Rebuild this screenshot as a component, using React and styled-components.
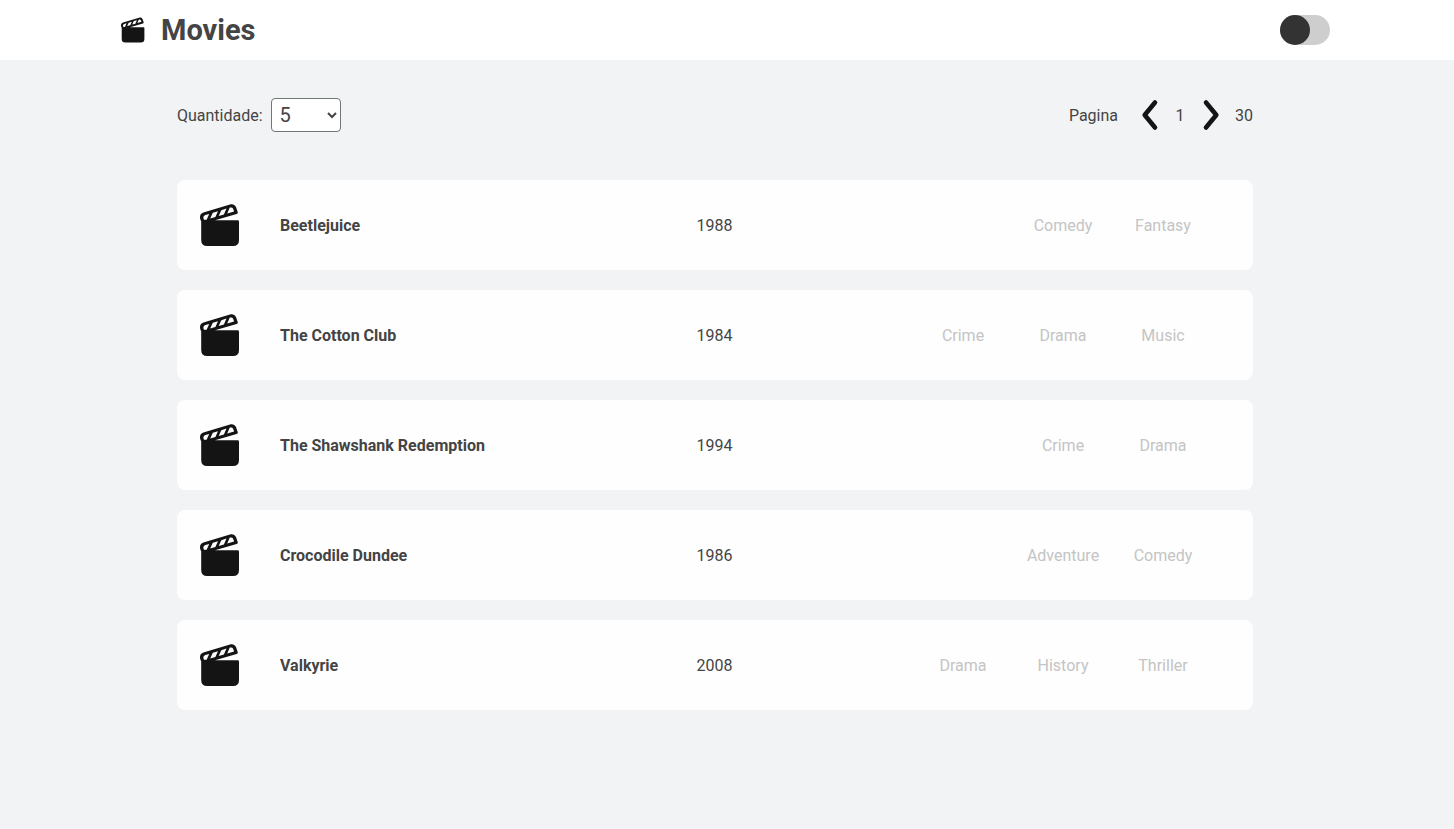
import React, { useState } from 'react';
import styled, { createGlobalStyle } from 'styled-components';

const GlobalStyle = createGlobalStyle`
  * { box-sizing: border-box; }
  body {
    margin: 0;
    min-height: 100vh;
    background: #f2f3f5;
    color: #444;
    font: 400 16px/21px Roboto, sans-serif;
  }
`;

const Header = styled.header`
  display: flex;
  align-items: center;
  justify-content: space-between;
  height: 60px;
  padding: 0 124px 0 121px;
  background: #fff;
`;

const Brand = styled.div`
  display: flex;
  align-items: center;
  gap: 16px;
`;

const Title = styled.h1`
  margin: 0;
  font-size: 29px;
  line-height: 36px;
  font-weight: 700;
`;

const ThemeSwitch = styled.input`
  appearance: none;
  display: flex;
  width: 50px;
  height: 30px;
  margin: 0;
  border-radius: 15px;
  background: #cecece;
  cursor: pointer;

  &::before {
    content: '';
    width: 30px;
    height: 30px;
    border-radius: 50%;
    background: #333;
  }

  &:checked { justify-content: flex-end; }
`;

const Main = styled.main`
  padding: 30px 201px 60px 177px;
`;

const Toolbar = styled.div`
  display: flex;
  align-items: center;
  justify-content: space-between;
  height: 50px;
  margin-bottom: 40px;
`;

const Quantity = styled.label`
  display: flex;
  align-items: center;
  gap: 8px;
`;

const Select = styled.select`
  width: 70px;
  height: 34px;
  padding: 0 0 0 4px;
  border: 1px solid #6f7777;
  border-radius: 4px;
  background: #fff;
  color: #444;
  font: 400 20px Roboto, sans-serif;
`;

const Pager = styled.nav`
  display: flex;
  align-items: center;
`;

const PageNumber = styled.span`
  width: 20px;
  text-align: center;
`;

const PageButton = styled.button`
  display: flex;
  align-items: center;
  justify-content: center;
  width: 30px;
  height: 34px;
  margin: 0 ${(p) => (p.$next ? 9 : 5)}px 0 ${(p) => (p.$next ? 6 : 17)}px;
  padding: 0;
  border: 0;
  background: none;
  color: #141414;
  cursor: pointer;
`;

const MovieList = styled.ul`
  display: grid;
  gap: 20px;
  margin: 0;
  padding: 0;
  list-style: none;
`;

const MovieRow = styled.li`
  display: grid;
  grid-template-columns: 1fr 100px 1fr;
  align-items: center;
  height: 90px;
  padding: 0 40px 0 23px;
  border-radius: 8px;
  background: #fefefe;
`;

const MovieName = styled.div`
  display: flex;
  align-items: center;
  gap: 40px;
  font-weight: 700;
`;

const Year = styled.span`
  margin-left: 16px;
  text-align: center;
`;

const Genres = styled.div`
  display: flex;
  justify-content: flex-end;
  color: #c4c4c4;
`;

const Genre = styled.span`
  width: 100px;
  text-align: center;
`;

const Clapper = ({ width, height }) => (
  <svg width={width} height={height} viewBox="0 0 40 42" aria-hidden="true">
    <path
      fill="#141414"
      fillRule="evenodd"
      d="M1.2 17.2 C.5 16 0 14.8 0 13.3 C0 10.8 1.2 9.2 3.4 8.5 L30 .4 C32.6-.4 35 .7 36 3 L37.8 8.2 Q38 9.6 36.6 10 L15 16.3 H37.6 Q39 16.3 39 17.7 V36 Q39 42 33 42 H7.2 Q1.2 42 1.2 36 Z M5.4 11.1 L9.2 9.9 L6.6 15.8 L4 15.8 Q2.2 12.2 5.4 11.1 Z M12.8 8.8 L18 7.2 L15.4 12.9 L10.2 14.4 Z M21.3 6.2 L26.5 4.6 L23.9 10.4 L18.7 11.9 Z M29.8 3.6 Q32.3 2.9 33.1 4.8 L34.1 7.4 L27.2 9.4 Z"
    />
  </svg>
);

const Chevron = ({ next }) => (
  <svg width="18" height="32" viewBox="0 0 18 32" aria-hidden="true">
    <path
      d={next ? 'M4 3.5 L14.3 16 L4 28.5' : 'M14 3.5 L3.7 16 L14 28.5'}
      fill="none"
      stroke="currentColor"
      strokeWidth="4.6"
      strokeLinecap="round"
      strokeLinejoin="round"
    />
  </svg>
);

const movies = [
  { title: 'Beetlejuice', year: 1988, genres: ['Comedy', 'Fantasy'] },
  { title: 'The Cotton Club', year: 1984, genres: ['Crime', 'Drama', 'Music'] },
  { title: 'The Shawshank Redemption', year: 1994, genres: ['Crime', 'Drama'] },
  { title: 'Crocodile Dundee', year: 1986, genres: ['Adventure', 'Comedy'] },
  { title: 'Valkyrie', year: 2008, genres: ['Drama', 'History', 'Thriller'] },
];

const lastPage = 30;

export default function App() {
  const [page, setPage] = useState(1);
  const [quantity, setQuantity] = useState('5');

  return (
    <>
      <GlobalStyle />
      <Header>
        <Brand>
          <Clapper width={24} height={26} />
          <Title>Movies</Title>
        </Brand>
        <ThemeSwitch type="checkbox" role="switch" aria-label="Tema" />
      </Header>
      <Main>
        <Toolbar>
          <Quantity>
            Quantidade:
            <Select value={quantity} onChange={(e) => setQuantity(e.target.value)}>
              <option>5</option>
              <option>10</option>
              <option>15</option>
            </Select>
          </Quantity>
          <Pager aria-label="Pagina">
            <span>Pagina</span>
            <PageButton aria-label="Anterior" onClick={() => setPage(Math.max(1, page - 1))}>
              <Chevron />
            </PageButton>
            <PageNumber>{page}</PageNumber>
            <PageButton $next aria-label="Seguinte" onClick={() => setPage(Math.min(lastPage, page + 1))}>
              <Chevron next />
            </PageButton>
            <span>{lastPage}</span>
          </Pager>
        </Toolbar>
        <MovieList>
          {movies.map((movie) => (
            <MovieRow key={movie.title}>
              <MovieName>
                <Clapper width={40} height={42} />
                {movie.title}
              </MovieName>
              <Year>{movie.year}</Year>
              <Genres>
                {movie.genres.map((genre) => (
                  <Genre key={genre}>{genre}</Genre>
                ))}
              </Genres>
            </MovieRow>
          ))}
        </MovieList>
      </Main>
    </>
  );
}
